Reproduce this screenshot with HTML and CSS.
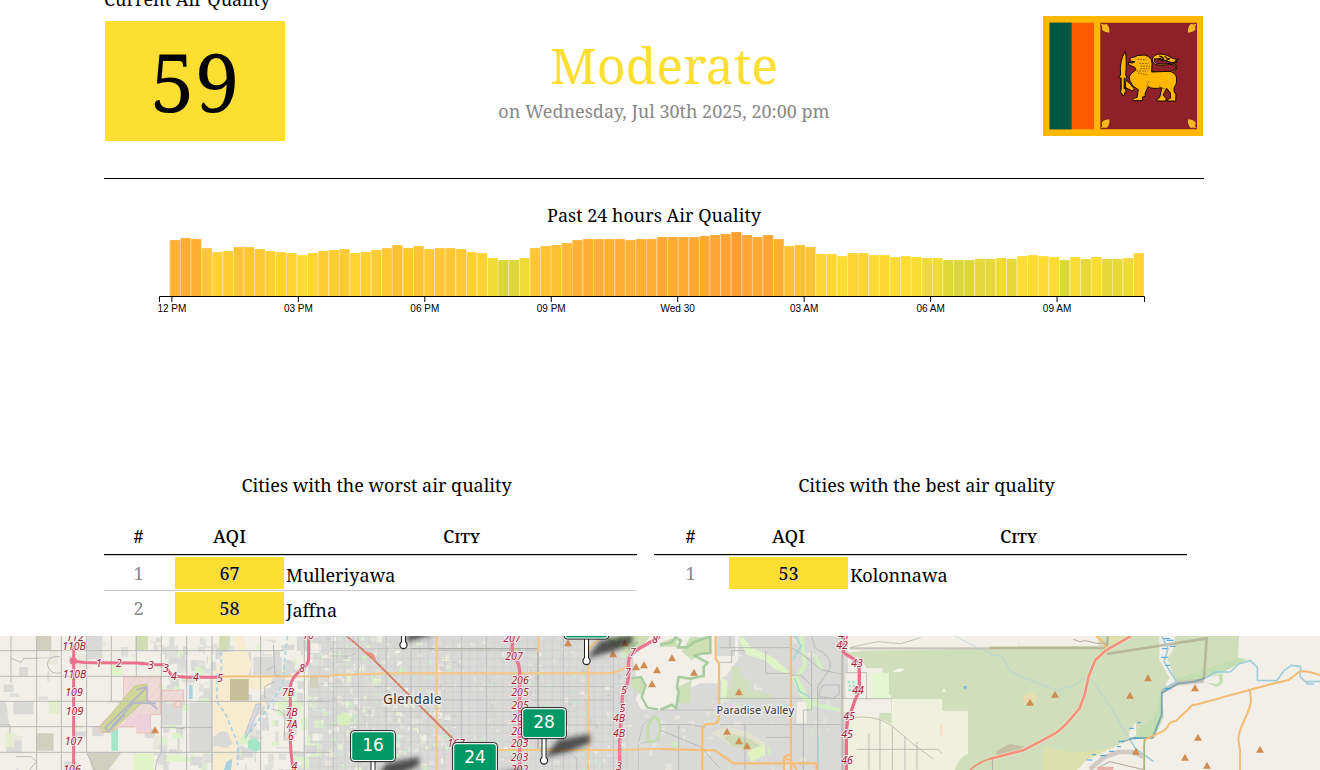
FILE: index.html
```html
<!DOCTYPE html>
<html lang="en">
<head>
<meta charset="utf-8">
<title>Sri Lanka Air Quality</title>
<link rel="stylesheet" href="styles.css">
</head>
<body>
<main class="page">
  <div class="section-label">Current Air Quality</div>
  <section class="summary">
    <div class="aqi-now">59</div>
    <div class="status">
      <div class="status-level">Moderate</div>
      <div class="status-time">on Wednesday, Jul 30th 2025, 20:00 pm</div>
    </div>
    <svg class="flag" viewBox="39 33 480 360">
      <path fill="#ffb700" d="M39 33h480v360H39z"/>
      <path fill="#00534e" d="M59 53h66v320H59z"/>
      <path fill="#005641" d="M59 53h66v320H59z"/>
      <path fill="#ff5b00" d="M125 53h67v320h-67z"/>
      <path fill="#8d2029" d="M211 53h290v320H211z"/>
      <g fill="#f6b923">
        <path id="leaf" d="M213 56q9 4 17 1q10 10 8 26q-14 0-23-10q4-8-2-17z"/>
        <use href="#leaf" transform="matrix(-1 0 0 1 712 0)"/>
        <use href="#leaf" transform="matrix(1 0 0 -1 0 426)"/>
        <use href="#leaf" transform="matrix(-1 0 0 -1 712 426)"/>
      </g>
      <g fill="#ffb700" stroke="#160705" stroke-width="3" stroke-linejoin="round">
        <path d="M364 199q38 4 63-1q14-5 11-14q-5-9-30-4q-33 4-40-10q-4-16 14-22q22-3 37 7q9 8 27 8l-12 6l8 3q-14 3-31-3l-18-8l-20 1q-4 10 9 14q14 3 38-1q18-2 21 10q1 12-14 18q-25 5-63 3z"/>
        <path d="M300 161q4-5 14-5q9-7 20-5q11-4 22 4q11 8 10 20l-1 26l52-2q19 2 23 20q2 18-8 30q-2 12 6 20l-1 19h-24q-3-7 9-9l-1-15l-11-14l-11 20l9 10v8h-28q-2-7 9-10l7-30q-28 6-42-3l-9 21q4 10-8 10l1 11h-31q0-8 14-10l4-23q-18-8-24-24l-4-14q5-11 21-22l-4-7l-17-7l-2-8l12 2l8-4l-15-2z"/>
        <path d="M286 222l26 28q2 8-8 7l-18-10z"/>
        <path d="M272 211q-5-43 14-72q5 25 1 73l4 3l-3 4l-2 34l3 7l-5 3v7l-7 2l-1-7l-5-2l2-8l-1-36l-5-2v-5z"/>
      </g>
      <path fill="none" stroke="#61400a" stroke-width="2.2" stroke-dasharray="5 3" d="M323 162l26 3m-20 10l27 1m-24 7l28 1m-29 7l27 0m-38 7l34 0m-30 6l30 6"/>
      <path fill="none" stroke="#321505" stroke-width="4" d="M273 218v34m10-34v34M384 160q18 16 36 0M388 153q10 3 14 9m2-8q9 9 15 8"/>
      <path fill="none" stroke="#8e6006" stroke-width="2" d="M356 228q-7 8-4 22M386 242q13 11 22 10"/>
    </svg>
  </section>
  <section class="history">
    <h2 class="caption">Past 24 hours Air Quality</h2>
    <svg class="chart" id="chart" viewBox="104 226 1100 100"></svg>
  </section>
  <section class="rankings">
    <div class="ranking ranking-worst">
      <h2 class="caption">Cities with the worst air quality</h2>
      <div class="row head"><b>#</b><b>AQI</b><b class="city-head">City</b></div>
      <div class="row"><span class="rank">1</span><span class="aqi">67</span><span class="city">Mulleriyawa</span></div>
      <div class="row"><span class="rank">2</span><span class="aqi">58</span><span class="city">Jaffna</span></div>
    </div>
    <div class="ranking ranking-best">
      <h2 class="caption">Cities with the best air quality</h2>
      <div class="row head"><b>#</b><b>AQI</b><b class="city-head">City</b></div>
      <div class="row"><span class="rank">1</span><span class="aqi">53</span><span class="city">Kolonnawa</span></div>
    </div>
  </section>
</main>
<svg class="map" viewBox="0 636 1320 134">
  <defs>
    <pattern id="hatch" width="18" height="18" patternUnits="userSpaceOnUse" patternTransform="rotate(35)"><path fill="#eedbd7" d="M0 0h18v18H0z"/><path stroke="#e7bcbc" stroke-width="2" d="M0 0v18"/></pattern>
    <filter id="soft" x="-30%" y="-60%" width="160%" height="220%"><feGaussianBlur stdDeviation="2.4"/></filter>
    <path id="peak" d="M0-11L12 10h-24z"/>
  </defs>
  <path fill="#f2efe9" d="M0 636h1320v134H0z"/>
  <path fill="#d9d9d8" d="M308 636h540v134H308z"/>
  <g id="blocks"></g>

  <!-- west side -->
  <g transform="translate(0 630) scale(.33333)">
    <path fill="#d1cfbd" d="M110 18h44v44h-44zM108 310h53v52h-53zM262 368h102l-38 52h-48zM930 140h26v34h-26z"/>
    <path fill="#d1dcb3" d="M406 18h38v42h-38zM658 18h28v46h-28z"/>
    <path fill="#d9d9d8" d="M0 215h18l10 70H0zM40 215h60v38H40zM262 18h45v70h-45zM568 218h69v148h-69zM485 220h62v66h-62zM680 66h74v70h-74zM760 80h86v55h-86z"/>
    <path fill="#f7ecd0" d="M668 66h40V18h18l29 87l-12 35h78l-20 36h-55v-30h-56v65h57l49 5l-64 92l-21 40l-3 72h-71l5-60l-7-140V150z"/>
    <path fill="#c5bf9b" d="M690 147h56v65h-56z"/>
    <path fill="#d9d9d8" d="M640 320l25-18l17 5l16 35l-20 11l-36-6z"/>
    <path fill="#a5e6c9" d="M334 290h20v72h-20zM744 333l21-10l16 15v22l-16 6l-21-12z"/>
    <path fill="#a8d2e0" d="M567 165h11v42h-11zM680 395l17-9l-4 34h-21z"/>
    <path fill="#f2efe9" d="M262 218h70v70h-70zM262 142h106v70H262zM410 65h72v28H410z"/>
    <path fill="#e3f3c8" d="M334 100h34v36h-34zM400 370h60v50h-60zM500 375h50v20h-50z"/>
    <path fill="url(#hatch)" stroke="#eeb6b1" stroke-width="2.5" d="M371 141h110v113h-29v55h-41v-19h-51l-28 17h-30l-10-14l79-76zM486 181h65v32h-65zM522 213h21v18h-21z"/>
    <path fill="#edcfdf" opacity=".7" d="M362 286l62-35l27 3v50h-40v-18z"/>
    <path fill="#ced799" stroke="#bac481" stroke-width="2" d="M299 293l104-125l37-6v44l-108 99h-24z"/>
    <path fill="none" stroke="#b3b5ca" stroke-width="5" d="M315 294L441 172v39l31 26M338 287l62-68l67 1M315 294l10 10l50-50M408 180l30-10"/>
    <path fill="#d8d8e3" stroke="#b8b8ca" stroke-width="2" d="M768 222h16l-40 92h-9z"/>
    <path fill="none" stroke="#b7b9b9" stroke-width="3" d="M0 62h850M0 139h640M0 214h990M0 290h300M480 292h157M0 367h990M33 18v140M110 18v402M184 18v402M260 18v350M334 18v196M409 18v123M484 18v350q-14 15-18 52M560 18v402M636 18v402M782 18v402M913 18v402M260 368l24 52M180 80q-42-4-37 28q10 28 40 20M0 285h30v25M33 85l30 12l8-12h45M484 292h35l35 5M820 45l5 90l25 5M795 205l-1-36l30-14M800 120l20-10M815 238l25 4l15 16l-2 62M48 380h45l16 15l-20 25"/>
    <path fill="none" stroke="#a8d2e0" stroke-width="5" stroke-dasharray="13 9" d="M664 65v53l-13 20v78l25 34l17 42l20 50v64M863 18l-7 52l-9 94l-24 40l-20 31l-70 92"/>
    <path fill="none" stroke="#f2bd77" stroke-width="5" d="M660 139h330"/>
    <path fill="none" stroke="#ea708e" stroke-width="9" d="M221 45v375M221 92q25 8 78 6l110 1l60 5l25 0l22 34l45 4h95M926 18v65q0 23-24 38q-30 25-31 49v160q1 45 9 90"/>
    <circle cx="220" cy="93" r="11" fill="#ea708e"/>
  </g>

  <!-- central city -->
  <g transform="translate(330 630) scale(.33333)">
    <path fill="none" stroke="#bdbdbd" stroke-width="2.4" d="M0 56h295l20 5h310v290M0 78h60l20-10M0 210h850M0 285h850M10 18v402M85 18v402M168 18v402M243 18v402M395 18v402M470 18v402M700 18v402M850 18v402M0 170h850M160 245h560M625 355h150v65M625 365h90l25 20v35M925 420v-80l13-55l45-35M930 340l60-10"/>
    <path fill="none" stroke="#aaa59c" stroke-width="3" d="M243 56h381v300"/>
    <path fill="#d9eebf" d="M20 260l22-15l22 15l-6 26H25z"/>
    <path fill="none" stroke="#c4dda8" stroke-width="8" d="M955 335q-9-55 18-73q17 5 17 34q-2 35-18 38z"/>
    <path fill="none" stroke="#f8c67e" stroke-width="6" d="M0 136l170-6h670q45-8 55-30M320 18v402M775 18v402M500 360h380l110-4M625 18v50M775 58l30-30"/>
    <path fill="#f2efe9" d="M905 60l20-30l30-12h270v70l-35 45l-45 40l-20 68H965l-32-4l-16-30l14-38l-12-26z"/>
    <path fill="#cfdfb5" d="M830 28l40-10h90l-30 40l-30 20zM905 145l28-4l12 24l-10 34l-30-30z"/>
    <path fill="none" stroke="#a9cd9f" stroke-width="7" d="M835 26l26 24l12-30M895 60l30-25M905 145l28-4l14 26l-12 34l17 32l33 5"/>
    <path fill="none" stroke="#cf8069" stroke-width="6" d="M50 18l75 65l250 250"/>
    <path fill="none" stroke="#ee9078" stroke-width="7" d="M100 65l28 10l8 18"/>
    <path fill="none" stroke="#eee2dd" stroke-width="2" stroke-dasharray="8 6" d="M50 18l320 315"/>
    <path fill="none" stroke="#ea7893" stroke-width="10" d="M547 18v52q20 22 22 55v295M990 20l-65 37q-34 20-29 48q3 60-18 85l-9 140v90"/>
    <path fill="none" stroke="#eed7da" stroke-width="2" stroke-dasharray="5 5" d="M569 135v285M880 190l-11 190"/>
  </g>

  <!-- Paradise Valley -->
  <g transform="translate(660 630) scale(.33333)">
    <path fill="#f2efe9" d="M556 128h76v80h-76zM545 208h113v53H545zM410 215h30v65h-30zM135 115l20-8l15 20l-10 20h-30z"/>
    <path fill="#d9d9d8" d="M165 18h60v60h-60zM50 195l40-20l30-15h45v80H50z"/>
    <path fill="#cddfb4" d="M66 65l24-45l60 3v48h-28l-27 20zM0 38l50-18v30H0zM55 170l40-20l-5 70H55z"/>
    <path fill="#d2debd" d="M215 108h25l10 40l26 5l-9 25l68 15v15H188l-6-26l32-12z"/>
    <path fill="none" stroke="#a9cd9f" stroke-width="8" stroke-linejoin="round" d="M0 45l35-8l12-15l16 10l-10 20l30 0l18-15l50-18v50l-28 2l-20 6l40 21l-12 12v28l-40 8l-35-5l-5 30l5 15l-8 50l-12-12l-35 15"/>
    <path fill="#e3e2cf" d="M155 308l50-20l62 20l50 31l-46 26l-60-20z"/>
    <path fill="#cfdab8" d="M190 322l30-10l50 15l30 20l-30 12l-50-8z"/>
    <path fill="#e1f4c7" d="M232 18l20 7l22 28l48 20l22 14l43 37l-2 11l-42-19l-30-26l-52-15zM184 145l19 9l-4 50l-14 20z"/>
    <path fill="none" stroke="#d4efc0" stroke-width="12" d="M425 18l9 90l-25 35l26 50l18 50M465 75l20 45M400 140l30 65l40 20l70 15"/>
    <path fill="#d1debb" d="M549 70l60-8l400-5v370H840l-25-24l-60-40l-50-40l-50-40l-70-18l-5-17h113v-53h-26v-80h-48l-16-30z"/>
    <path fill="#f2efe9" d="M545 208h113v53H565v159h280l-90-57l-50-45l-50-40h-90z"/>
    <path fill="#e3f6d2" d="M635 128h52v78h-52z"/>
    <path fill="#f0f1dc" d="M695 207h152v35h77v130q-27 10-40 48H565V250q70-4 130 32z"/>
    <path fill="none" stroke="#a5e3cb" stroke-width="7" stroke-dasharray="8 5" d="M563 156h25M566 168h24M565 180h24"/>
    <path fill="#f7dfc7" d="M840 282h8v38h-8z"/>
    <path fill="#e1f2bf" d="M262 366l52-25l1 35l-42 20z"/>
    <path fill="none" stroke="#b2b2b2" stroke-width="2.5" d="M0 240h165M0 284h90l45 8M178 53h216l36 22l55 45l60 12M178 97h37V62h40M210 18v35M170 205h395M180 284h370M255 284v136M317 62v68h76M317 322h76v75M430 420v-180h25V65M455 18l10 36q50 20 46 60l-38 55v250M395 135l28 1l32 31M477 200q0-34 20-35h40v30l-20 10zM558 128h62M565 206h130M590 358h245l10 12M627 310v110M660 265v155M697 290v130M735 318v102M771 335v85M0 300l120 50l60 65M56 284v136"/>
    <path fill="none" stroke="#98d9cf" stroke-width="4" d="M404 18l20 30l-25 40M404 145l15 40l30 15M474 320v100"/>
    <path fill="none" stroke="#aaa798" stroke-width="7" opacity=".6" d="M547 75v345M570 55h420"/>
    <path fill="none" stroke="#b7b7a7" stroke-width="2.5" d="M572 52l80-17l70 6l60-18M620 128v80M565 265q75-15 130 22l70 60l55 40"/>
    <path fill="none" stroke="#b6d5dc" stroke-width="2" d="M884 18l45 23l61 29"/>
    <path fill="none" stroke="#f8bd74" stroke-width="6.500" d="M167 18v68l10 14v160q0 20-20 22h-15q-15 1-15 18v120M0 357l165 4l55 39h250v20M393 18v402M372 420v-32q0-11 20-15M375 388h15l20 32"/>
    <path fill="none" stroke="#e8708b" stroke-width="10" d="M550 18v50l38 23q10 9 10 38v52q-14 28-25 65q-14 22-14 70v104"/>
    <path fill="none" stroke="#ec967d" stroke-width="6" d="M930 420q20-20 60-34"/>
    <path fill="#77bbe1" d="M911 168h9v8h-9z"/>
    <path fill="#fff" opacity=".7" d="M697 125l20-10l17 2l-10 9zM848 178h8v7h-8z"/>
  </g>

  <!-- eastern desert -->
  <g transform="translate(990 630) scale(.33333)">
    <path fill="#d1debb" d="M0 50h85V18h662l-4 71l-97 52l-90 17l-40 30l2 70l-28 63l-60 14l-60 95H0z"/>
    <path fill="#f2efe9" d="M85 18h240v30H85z"/>
    <path fill="#c4deb4" d="M555 148l100-35l90-30l26 6l-70 36l-54 18l-32 10l-30-4l-40 9zM515 190l7 70l-30 65h-50v-25l50-40zM655 143l43-14v30l-16 13l-32-14l30 4l8-8v-18z"/>
    <path fill="#f2efe9" d="M508 18h47l-5 40l-18 30l18 50l14 20l-24 15l-15-9l14-20l-31-55z"/>
    <path fill="#dce0ac" d="M160 345q85 40 215 5l-40 40l-50 30H160zM355 18h60l-45 30h-15z"/>
    <path fill="#f2efe9" d="M290 390l95-45l35-25l40 8v92H260zM418 304l20-27v40l-20 8z"/>
    <path fill="#c2bfa5" d="M20 362l40-20l45 8l-18 10l-70 23z"/>
    <path fill="#e5ddb1" d="M98 200l25-15l22 18l-18 17h-24z"/>
    <g fill="none">
      <path stroke="#adab8f" opacity=".75" stroke-width="8" d="M0 54h350l4-36M350 72l300-47l-8 120"/>
      <path stroke="#b0a5a0" opacity=".5" stroke-width="14" d="M300 418l40-35l45-17h42l33 15M515 185l45-25l82-8"/>
      <path stroke="#a9d2df" stroke-width="2.5" d="M0 74l35 5l30 48l60 25l75 30l50-15l45-28M302 145l60 85l50 89"/>
      <path stroke="#9fcddb" stroke-width="5" stroke-linejoin="round" d="M515 18l19 37l-12 40l37 60l-43 28l-1 71l-27 69l-70 2l18 30l55 40M645 145l33-20l43 1l25-24l35-10l21 20v39l58 1l23-31l21-15l28 4l-2 29l16 16l44-1M943 152l10 10h20"/>
      <path stroke="#65969a" stroke-width="5" opacity=".7" d="M645 145l-31 10l-51 6l-48 28v65l-27 69l-60 2l-34 12"/>
      <path stroke="#f3ba71" stroke-width="6" d="M990 135l-32-9q-29-6-38 6l-25 18l-50 12l-65 17l-162 45q-12-3-20 11l-39 37q-21 3-24 14q-5 13-25 22l-40 18q-8 5-8 20v74M780 179l3 36q-4 22-17 49q-24 48-20 70l4 28v58M318 18q25 15 35 45"/>
      <path stroke="#dfe5cf" stroke-width="13" d="M-5 388l105-27l85-45q30-13 84-82l15-40l12-55l20-49l32-29l75-43"/>
      <path stroke="#f7917b" stroke-width="8" d="M-5 388l105-27l85-45q30-13 84-82l15-40l12-55l20-49l32-29l75-43"/>
      <path stroke="#3ba0e6" stroke-width="3" d="M530 31h21M540 49h17M515 56h17M513 82h22M527 106h13M540 26h-20M523 176h18M418 295h14M443 278h10M386 334h15M381 350h12M357 364h15M330 377h19M306 374h12M291 390h16M430 324h18"/>
      <path stroke="#b8a7a2" stroke-width="3" d="M8 388v32M320 415l40-20l105 25M250 28l20 7l15-3l35 8h30"/>
      <path stroke="#8cb878" stroke-width="3" d="M463 328v92"/>
    </g>
    <path fill="#e9b0a9" d="M325 410h45v10h-48z"/>
  </g>

  <g id="peaks" fill="#cf8e50"></g>
  <g id="exits" class="exit"></g>
  <text class="place" x="383" y="704" textLength="58.500">Glendale</text>
  <text class="place place-small" x="716.500" y="714" textLength="77.500">Paradise Valley</text>
  <g id="pins"></g>
</svg>
<script src="script.js"></script>
</body>
</html>
```
FILE: styles.css
```css
body { margin: 0; background: #fff; color: #000; font: 18px/24px "Noto Serif", "Droid Serif", serif; height: 770px; overflow: hidden; display: flex; flex-direction: column; }
.page { width: 1100px; height: 636px; margin-left: 104px; flex: none; }
.section-label { height: 16px; line-height: 24px; margin-top: -13px; }
.summary { display: flex; justify-content: space-between; height: 162px; margin-top: 13px; border-bottom: 1px solid #000; }
.aqi-now { box-sizing: border-box; width: 180px; height: 120px; margin: 5px 0 0 1px; background: #ffde33; text-align: center; font-size: 80px; line-height: 120px; }
.status { text-align: center; width: 400px; padding-top: 15px; color: #888; }
.status-level { color: #ffde33; font-size: 50px; line-height: 68px; }
.status-time { line-height: 24px; }
.flag { width: 160px; height: 120px; margin-right: 1px; }
.caption { margin: 0; font-size: 18px; font-weight: normal; text-align: center; line-height: 24px; }
.history { height: 270px; padding-top: 24px; }
.chart { display: block; width: 1100px; height: 100px; margin-top: -1px; }
.tick { font: 10px "Liberation Sans", Arial, sans-serif; text-anchor: middle; }
.rankings { display: flex; gap: 17px; }
.ranking { width: 533px; }
.ranking .caption { padding: 0 0 26px; margin-right: -12px; }
.row { display: grid; height: 34px; border-top: 1px solid #ccc; line-height: 32px; text-align: center; }
.ranking-worst .row { grid-template-columns: 69px 113px 351px; }
.ranking-best .row { grid-template-columns: 73px 123px 337px; }
.row.head { height: 31px; border-top: 0; border-bottom: 1px solid #000; line-height: 27px; }
.row b { font-weight: 500; }
.city-head { font-variant: small-caps; }
.rank { color: #888; padding-top: 1px; }
.aqi { background: #ffde33; height: 32px; margin: 1px 2px; text-shadow: 1px 1px 1px #ccc; }
.city { text-align: left; padding: 3px 0 0; line-height: 32px; height: 28px; }
.map { display: block; width: 1320px; height: 134px; flex: none; }
.exit { font: italic 10.5px "Noto Sans", sans-serif; fill: #a52036; stroke: #f5eded; stroke-width: 1.8px; paint-order: stroke; text-anchor: middle; }
.place { font: 13.5px "Noto Sans", sans-serif; fill: #333; stroke: #eee; stroke-width: 2.5px; paint-order: stroke; }
.place-small { font-size: 11px; }
.pin-label { font: 17px "DejaVu Sans", sans-serif; fill: #fff; text-anchor: middle; }
```
FILE: script.js
```js
const levels = [135,129,132,159,171,168,156,156,162,168,171,174,180,174,168,165,162,174,171,165,159,150,159,153,162,159,159,162,171,174,189,195,195,189,159,153,150,144,135,132,132,132,132,135,132,132,126,126,126,126,123,120,117,111,120,126,120,132,153,150,156,177,177,183,174,174,180,180,186,183,186,189,189,195,195,195,192,192,189,192,183,180,183,186,195,186,192,186,192,192,189,174];
const stops = [[111,255,159,51],[132,255,174,51],[150,255,191,51],[162,255,201,51],[174,255,211,51],[183,255,220,51],[186,252,220,51],[189,240,218,54],[195,220,214,58]];
function tone(v) {
  for (let i = 1; i < stops.length; i++) {
    const a = stops[i - 1], b = stops[i];
    if (v <= b[0]) { const t = (v - a[0]) / (b[0] - a[0]); return `rgb(${[1,2,3].map(k => Math.round(a[k] + (b[k] - a[k]) * t))})`; }
  }
}
let chart = '';
levels.forEach((v, i) => {
  const x = 169.6 + i * 10.59, y = 195 + v / 3;
  chart += `<rect x="${x}" y="${y}" width="10.59" height="${296.5 - y}" fill="${tone(v)}"/><path d="M${x + .3} ${296}V${y}" fill="none" stroke="#fff" stroke-opacity=".4"/><path d="M${x} ${y + .5}h10.59" stroke="#fff" stroke-opacity=".1"/>`;
});
chart += '<path fill="none" stroke="#000" d="M159.500 302V296.500H1144.500V302"/>';
['12 PM','03 PM','06 PM','09 PM','Wed 30','03 AM','06 AM','09 AM'].forEach((t, i) => {
  const x = 171.9 + i * 126.45;
  chart += `<path stroke="#000" d="M${x} 297v5"/><text class="tick" x="${x}" y="312">${t}</text>`;
});
document.getElementById('chart').innerHTML = chart;

let seed = 73;
const rnd = () => (seed = (seed * 16807) % 2147483647) / 2147483647;
let blocks = '';
function scatter(n, x0, x1, colors, s) {
  for (let i = 0; i < n; i++) {
    blocks += `<rect x="${(x0 + rnd() * (x1 - x0)).toFixed(1)}" y="${(636 + rnd() * 134).toFixed(1)}" width="${(1 + rnd() * s).toFixed(1)}" height="${(1 + rnd() * s).toFixed(1)}" fill="${colors[Math.floor(rnd() * colors.length)]}"/>`;
  }
}
scatter(45, 0, 160, ['#d9d9d8', '#dcdcda', '#e4edcf', '#eae8dd'], 14);
scatter(330, 150, 320, ['#d9d9d8', '#d9d9d8', '#dfdfdc', '#def2c9', '#f2efe9'], 13);
scatter(230, 315, 450, ['#f2efe9', '#e5e3dd', '#d0ecc8', '#cfcfcf', '#e9e5dd', '#e5f3d0'], 6);
scatter(330, 315, 625, ['#f2efe9', '#e5e3dd', '#e0e0de', '#c8ead0', '#cfcfcf', '#e9e5dd'], 4);
scatter(110, 620, 845, ['#e5e3dd', '#e0e0de', '#d4e8c8', '#e9e5dd'], 7);
for (let x = 320; x < 630; x += 8.3) blocks += `<path stroke="#cbcbcb" stroke-width=".5" d="M${x} 636v134"/>`;
for (let y = 642; y < 770; y += 8.3) blocks += `<path stroke="#cdcdcd" stroke-width=".5" d="M308 ${y}h320"/>`;
document.getElementById('blocks').innerHTML = blocks;

const peaks = [[155,730],[568,643],[613,654],[625,643],[636,667],[644,665],[657,670],[652,684],[672,658],[694,672.5],[739,692],[727,731.500],[739,741],[747,746],[1030,702.500],[1055,694.500],[1148,678],[1130,695.500],[1195,688],[1198,737.500],[1136,751.500],[1185,757.500],[1207,765.500],[1260,749.500]];
document.getElementById('peaks').innerHTML = peaks.map(p => `<use href="#peak" transform="translate(${p}) scale(.33)"/>`).join('');

const exits = [['112',75,640.500],['110B',74,650],['110B',74.500,678],['109',74,695.500],['109',74.500,715],['107',73.500,745],['106',72,773],['1',99,666.500],['2',119,666.500],['3',151,669],['3',166,672],['4',174,680],['4',196,681],['5',220,681.500],['10',308,639],['8',302,672],['7B',288,696],['7B',291.500,715.500],['7A',291.500,727.500],['6',291,740],['4',294.500,770],
['207',512,641.500],['207',514,660],['206',520,684],['205',520,696],['205',520,708.500],['204',520,722],['203',520,734.500],['203',519.500,746.500],['203',519.500,761],['202',519.500,772.500],['167',456,746.500],['8',655,642.500],['7',633,656],['7',628,675.500],['5',624,694],['5',622.500,711.500],['4B',619,721.500],['4B',619,736.500],['3',619,770],
['41',844,638.500],['42',842,648.500],['43',857,667],['44',858,694],['45',849,720],['45',847,737.500],['46',847,764]];
document.getElementById('exits').innerHTML = exits.map(([t,x,y]) => `<text x="${x}" y="${y}">${t}</text>`).join('');

const pins = [[403.500,592.500,''],[586.500,608.500,''],[544,708,'28'],[373,731,'16'],[475,743,'24']];
document.getElementById('pins').innerHTML = pins.map(([x,y,t]) => `
  <path d="M${x} ${y + 50}l14-18l32-6v9l-20 8z" fill="#222" opacity=".75" filter="url(#soft)"/>
  <path d="M${x} ${y + 30}v20" stroke="#222" stroke-width="5"/>
  <circle cx="${x}" cy="${y + 52.500}" r="3.600" fill="#fff" stroke="#222" stroke-width="1.200"/>
  <path d="M${x} ${y + 30}v22" stroke="#fff" stroke-width="3"/>
  <rect x="${x - 22.400}" y="${y - .4}" width="44.800" height="31" rx="3.500" fill="#fff" stroke="#222" stroke-width="1"/>
  <rect x="${x - 20.800}" y="${y + 1.200}" width="41.600" height="27.800" rx="2.500" fill="#096"/>
  <text class="pin-label" x="${x}" y="${y + 19.500}">${t}</text>`).join('');
```
